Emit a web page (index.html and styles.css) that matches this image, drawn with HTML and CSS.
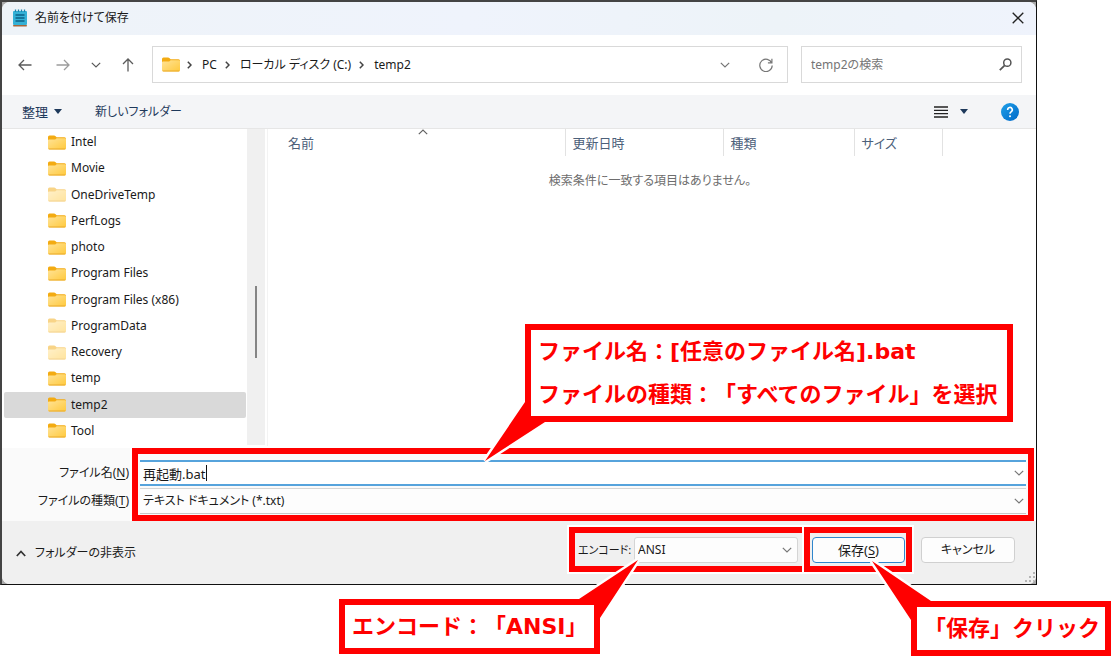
FILE: index.html
```html
<!DOCTYPE html>
<html lang="ja">
<head>
<meta charset="utf-8">
<title>名前を付けて保存</title>
<link rel="stylesheet" href="styles.css">
</head>
<body>
<svg class="defs" width="0" height="0" aria-hidden="true">
  <defs>
    <linearGradient id="front" x1="0" y1="0" x2="1" y2="1"><stop offset="0" stop-color="#ffe397"/><stop offset="1" stop-color="#ffc93c"/></linearGradient>
    <linearGradient id="helpfill" x1="0" y1="0" x2="1" y2="1"><stop offset="0" stop-color="#1fa0e8"/><stop offset="1" stop-color="#0068c8"/></linearGradient>
  </defs>
  <symbol id="folder" viewBox="0 0 18 15">
    <path d="M0 2Q0 .5 1.500 .5H6Q7 .5 7.600 1.200L8.600 2.200H16.500Q18 2.200 18 3.700V8H0Z" fill="#f3ab12"/>
    <path d="M0 5.300Q0 4.500 1 4.500H6.500Q7.200 4.500 7.800 4L8.600 3.200H17Q18 3.200 18 4.200V13Q18 14.500 16.500 14.500H1.500Q0 14.500 0 13Z" fill="url(#front)"/>
    <path d="M.3 13.600Q.7 14.500 1.500 14.500H16.500Q17.300 14.500 17.700 13.600Z" fill="#e9a92c"/>
  </symbol>
  <symbol id="down" viewBox="0 0 10 6"><path d="M.8 .8L5 5L9.200 .8" fill="none" stroke="currentColor" stroke-width="1.200"/></symbol>
  <symbol id="right" viewBox="0 0 5 8"><path d="M.8 .8L4 4L.8 7.200" fill="none" stroke="currentColor" stroke-width="1.500"/></symbol>
</svg>

<div class="page">
  <div class="shot">
  <main class="dialog">
    <header class="titlebar">
      <svg class="notepad" viewBox="0 0 14 18">
        <rect x="0" y="2" width="14" height="14" rx="1" fill="#35b1d6"/>
        <rect x="0" y="16" width="14" height="1.500" rx=".7" fill="#a5663a"/>
        <path d="M2.500 .5V3M5.500 .5V3M8.500 .5V3M11.500 .5V3" stroke="#1d86ad" stroke-width="1.300"/>
        <path d="M2.500 6H11.500M2.500 9H11.500M2.500 12H11.500" stroke="#0c6288" stroke-width="1.300"/>
      </svg>
      <h1 class="title">名前を付けて保存</h1>
      <button class="icon-btn close" aria-label="閉じる"><svg width="12" height="12" viewBox="0 0 12 12"><path d="M.7 .7L11.300 11.300M11.300 .7L.7 11.300" stroke="#222" stroke-width="1.300"/></svg></button>
    </header>

    <nav class="nav">
      <div class="arrows">
        <button class="icon-btn" aria-label="戻る"><svg width="14" height="12" viewBox="0 0 14 12"><path d="M13.500 6H1M6 1L1 6L6 11" fill="none" stroke="#5b5b5b" stroke-width="1.300"/></svg></button>
        <button class="icon-btn forward" aria-label="進む"><svg width="14" height="12" viewBox="0 0 14 12"><path d="M.5 6H13M8 1L13 6L8 11" fill="none" stroke="#9c9c9c" stroke-width="1.300"/></svg></button>
        <button class="icon-btn" aria-label="最近の場所"><svg width="10" height="6"><use href="#down"/></svg></button>
        <button class="icon-btn" aria-label="上へ"><svg width="12" height="14" viewBox="0 0 12 14"><path d="M6 13.500V1M1 6L6 1L11 6" fill="none" stroke="#5b5b5b" stroke-width="1.300"/></svg></button>
      </div>
      <div class="address">
        <svg width="18" height="15"><use href="#folder"/></svg>
        <svg class="sep" width="5" height="8"><use href="#right"/></svg>
        <a class="crumb" href="#">PC</a>
        <svg class="sep" width="5" height="8"><use href="#right"/></svg>
        <a class="crumb" href="#">ローカル ディスク (C:)</a>
        <svg class="sep" width="5" height="8"><use href="#right"/></svg>
        <a class="crumb" href="#">temp2</a>
        <div class="address-tools">
          <button class="icon-btn" aria-label="履歴"><svg width="10" height="6"><use href="#down"/></svg></button>
          <button class="icon-btn" aria-label="更新"><svg width="14" height="14" viewBox="0 0 14 14"><path d="M12.800 5.200A6.200 6.200 0 1 0 13.200 7.500M12.900 .8V4.800H8.900" fill="none" stroke="#777" stroke-width="1.200"/></svg></button>
        </div>
      </div>
      <label class="search">
        <input class="search-input" type="text" placeholder="temp2の検索" aria-label="temp2の検索">
        <svg width="13" height="13" viewBox="0 0 13 13"><circle cx="8.300" cy="4.700" r="3.600" fill="none" stroke="#555" stroke-width="1.500"/><path d="M5.700 7.300L.8 12.200" stroke="#555" stroke-width="1.700"/></svg>
      </label>
    </nav>

    <div class="toolbar">
      <button class="tool large">整理<span class="tri"></span></button>
      <button class="tool">新しいフォルダー</button>
      <div class="view-tools">
        <button class="icon-btn" aria-label="表示"><svg width="14" height="12" viewBox="0 0 14 12"><path d="M0 1H14M0 4.300H14M0 7.600H14M0 11H14" stroke="#222" stroke-width="1.300"/></svg></button>
        <button class="icon-btn" aria-label="表示オプション"><span class="tri"></span></button>
        <button class="icon-btn help" aria-label="ヘルプ"><svg width="18" height="18" viewBox="0 0 18 18"><circle cx="9" cy="9" r="9" fill="url(#helpfill)"/><path d="M6.700 7A2.300 2.300 0 1 1 10.200 8.700Q9 9.400 9 10.800" fill="none" stroke="#fff" stroke-width="1.600"/><circle cx="9" cy="13.200" r="1" fill="#fff"/></svg></button>
      </div>
    </div>

    <div class="body">
      <ul class="tree">
        <li class="node"><svg class="folder"><use href="#folder"/></svg>Intel</li>
        <li class="node"><svg class="folder"><use href="#folder"/></svg>Movie</li>
        <li class="node"><svg class="folder faded"><use href="#folder"/></svg>OneDriveTemp</li>
        <li class="node"><svg class="folder"><use href="#folder"/></svg>PerfLogs</li>
        <li class="node"><svg class="folder"><use href="#folder"/></svg>photo</li>
        <li class="node"><svg class="folder"><use href="#folder"/></svg>Program Files</li>
        <li class="node"><svg class="folder"><use href="#folder"/></svg>Program Files (x86)</li>
        <li class="node"><svg class="folder faded"><use href="#folder"/></svg>ProgramData</li>
        <li class="node"><svg class="folder faded"><use href="#folder"/></svg>Recovery</li>
        <li class="node"><svg class="folder"><use href="#folder"/></svg>temp</li>
        <li class="node selected"><svg class="folder"><use href="#folder"/></svg>temp2</li>
        <li class="node"><svg class="folder"><use href="#folder"/></svg>Tool</li>
      </ul>
      <div class="scrollbar"><div class="thumb"></div></div>
      <div class="files">
        <table class="table">
          <colgroup><col class="c-name"><col class="c-date"><col class="c-type"><col class="c-size"><col></colgroup>
          <thead><tr>
            <th class="sorted">名前<svg class="sort" width="10" height="6" viewBox="0 0 10 6"><path d="M.8 5.200L5 1L9.200 5.200" fill="none" stroke="#666" stroke-width="1.200"/></svg></th>
            <th>更新日時</th><th>種類</th><th>サイズ</th><td></td>
          </tr></thead>
          <tbody><tr><td class="empty" colspan="5">検索条件に一致する項目はありません。</td></tr></tbody>
        </table>
      </div>
    </div>

    <div class="fields">
      <div class="labels">
        <label class="label" for="fname">ファイル名(<u>N</u>)</label>
        <label class="label" for="ftype">ファイルの種類(<u>T</u>)</label>
      </div>
      <div class="inputs marked">
        <div class="combo active">
          <input id="fname" class="field large" type="text" value="再起動.bat">
          <span class="caret"></span>
          <svg class="chev" width="10" height="6"><use href="#down"/></svg>
        </div>
        <div class="combo">
          <select id="ftype" class="field"><option>テキスト ドキュメント (*.txt)</option></select>
          <svg class="chev" width="10" height="6"><use href="#down"/></svg>
        </div>
      </div>
    </div>

    <footer class="footer">
      <button class="fold"><svg width="10" height="7" viewBox="0 0 10 7"><path d="M.8 6L5 1.500L9.200 6" fill="none" stroke="#333" stroke-width="1.700"/></svg>フォルダーの非表示</button>
      <div class="encode marked">
        <label class="encode-label" for="enc">エンコード:</label>
        <div class="combo boxed">
          <select id="enc" class="field"><option>ANSI</option></select>
          <svg class="chev" width="10" height="6"><use href="#down"/></svg>
        </div>
      </div>
      <div class="save marked"><button class="btn primary large">保存(<u>S</u>)</button></div>
      <button class="btn">キャンセル</button>
      <svg class="grip" width="12" height="12" viewBox="0 0 12 12"><path d="M9 0h2v2h-2zM9 4h2v2h-2zM5 4h2v2h-2zM9 8h2v2h-2zM5 8h2v2h-2zM1 8h2v2h-2z" fill="#b5b5b5"/></svg>
    </footer>
  </main>
  </div>

  <div class="callout names">
    <p>ファイル名：[任意のファイル名].bat</p>
    <p>ファイルの種類：「すべてのファイル」を選択</p>
  </div>
  <div class="callout encoding"><p>エンコード：「ANSI」</p></div>
  <div class="callout saving"><p>「保存」クリック</p></div>
  <svg class="pointers" width="1116" height="661" viewBox="0 0 1116 661" aria-hidden="true">
    <g fill="none" stroke="#fff" stroke-width="5">
      <path d="M525 402L485 461L545 422"/>
      <path d="M579 599L638 560L600 618"/>
      <path d="M911 620L872 561L931 601"/>
    </g>
    <g fill="#f00">
      <path d="M525 402L485 461L545 422V417H530V402Z"/>
      <path d="M579 599L638 560L600 618H595V604H579Z"/>
      <path d="M911 620L872 561L931 601V606H916V620Z"/>
    </g>
  </svg>
</div>
</body>
</html>
```
FILE: styles.css
```css
* { box-sizing: border-box; }
body {
  margin: 0;
  background: #fff;
  color: #1a1a1a;
  font: 12px/16px "Noto Sans", "Noto Sans CJK JP", sans-serif;
  font-feature-settings: "palt";
}
button, input, select { font: inherit; font-feature-settings: inherit; color: inherit; }
button { border: 0; padding: 0; background: none; }
h1, p, ul { margin: 0; padding: 0; }
a { color: inherit; text-decoration: none; }
u { text-underline-offset: 2px; }
svg { display: block; flex: none; }
.defs { position: absolute; }
.large { font-size: 13px; }

.page { position: relative; padding: 0 79px 76px 0; }
.shot {
  border: 2px solid #444;
  border-right: 1px solid #111;
  border-bottom: 1px solid #111;
  background: #aaa;
}
.dialog {
  display: flex;
  flex-direction: column;
  background: #fff;
  border-radius: 8px;
  overflow: hidden;
}
.icon-btn { display: flex; align-items: center; justify-content: center; }

.titlebar {
  display: flex;
  align-items: center;
  gap: 8px;
  height: 33px;
  padding: 0 12px 2px 11px;
  background: linear-gradient(90deg, #eef3f8, #eff3fc 45%, #edf3f8 75%, #eff3fc);
}
.notepad { width: 14px; height: 18px; }
.title { font-size: 12px; line-height: 16px; font-weight: normal; }
.close { margin-left: auto; }

.nav { display: flex; align-items: center; gap: 13px; padding: 11px 14px 12px 16px; }
.arrows { display: flex; align-items: center; gap: 21px; width: 121px; color: #5b5b5b; }
.forward { margin-left: 3px; }
.address {
  display: flex;
  align-items: center;
  flex: 1;
  height: 37px;
  padding: 0 14px 0 9px;
  border: 1px solid #d9d9d9;
}
.sep { margin: 0 8px 0 7px; color: #444; }
.crumb { padding: 0 1px 0 2px; }
.address-tools { display: flex; gap: 29px; margin-left: auto; color: #777; }
.search {
  display: flex;
  align-items: center;
  width: 221px;
  height: 37px;
  padding: 0 9px;
  border: 1px solid #d9d9d9;
}
.search-input { flex: 1; min-width: 0; border: 0; padding: 0; outline: 0; background: none; }
.search-input::placeholder { color: #757575; opacity: 1; }

.toolbar {
  display: flex;
  align-items: center;
  gap: 33px;
  height: 34px;
  padding: 0 17px 0 20px;
  background: #f4f5f7;
  border-bottom: 1px solid #e6e6e6;
  color: #1e395b;
}
.tool { display: flex; align-items: center; gap: 6px; }
.tri { border: 4px solid transparent; border-top: 5px solid #1e395b; border-bottom: 0; }
.view-tools { display: flex; align-items: center; gap: 12px; margin-left: auto; }
.help { margin-left: 21px; }

.body { display: flex; height: 319px; }
.tree { display: grid; grid-auto-rows: 1fr; width: 245px; padding: 0 1px 4px 2px; list-style: none; }
.node { display: flex; align-items: center; gap: 5px; padding-left: 44px; border-radius: 2px; }
.node.selected { background: #d9d9d9; }
.folder { width: 18px; height: 15px; }
.faded { opacity: .5; }
.scrollbar { width: 18px; margin-bottom: 3px; padding: 157px 8px 0; background: #f0f0f0; }
.thumb { width: 2px; height: 72px; background: #858585; }
.files { flex: 1; margin-left: 2px; border-left: 1px solid #f3f3f3; }
.table { width: 100%; table-layout: fixed; border-collapse: collapse; }
.c-name { width: 297px; }
.c-date { width: 158px; }
.c-type { width: 131px; }
.c-size { width: 88px; }
.table th {
  position: relative;
  height: 27px;
  padding: 0 7px;
  border-right: 1px solid #e2e2e2;
  color: #4c607a;
  font-size: 13px;
  font-weight: normal;
  text-align: left;
}
.table .sorted { padding-left: 20px; }
.sort { position: absolute; top: 0; left: calc(50% + 2px); }
.empty { padding: 17px 4px 0 0; color: #6d6d6d; text-align: center; }

.fields { display: flex; gap: 3px; padding-right: 2px; background: #fafafa; }
.labels { display: flex; flex-direction: column; gap: 2px; width: 127px; padding: 12px 0 7px; text-align: right; }
.label { height: 26px; line-height: 26px; white-space: nowrap; }
.marked { border: 6px solid #f00; outline: 2px solid #fff; }
.inputs { display: flex; flex: 1; flex-direction: column; gap: 2px; padding: 6px 2px 1px; }
.combo {
  position: relative;
  display: flex;
  align-items: center;
  height: 26px;
  border-top: 1px solid #d5d5d5;
  border-bottom: 1px solid #c8c8c8;
  background: #fdfdfd;
  color: #777;
}
.combo.active { border-top: 2px solid #56a3dc; border-bottom: 2px solid #56a3dc; background: #fff; }
.field { width: 100%; height: 100%; padding: 0 3px; border: 0; outline: 0; background: none; appearance: none; color: #1a1a1a; }
.caret { position: absolute; left: 66px; width: 1px; height: 16px; background: #111; }
.chev { position: absolute; right: 2px; }

.footer { position: relative; display: flex; align-items: flex-start; min-height: 63px; padding: 6px 21px 5px 14px; background: #f0f0f0; }
.fold { display: flex; align-items: center; gap: 9px; height: 52px; margin-right: auto; }
.encode { display: flex; align-items: center; width: 239px; height: 45px; padding: 0 4px 0 3px; }
.encode-label { flex: 1; font-size: 11px; white-space: nowrap; }
.boxed { width: 164px; border: 1px solid #d5d5d5; border-radius: 3px; }
.boxed .chev { right: 5px; }
.save { position: relative; height: 45px; margin: 0 9px 0 -4px; padding: 4px 1px 3px 2px; }
.btn { width: 94px; height: 26px; margin-top: 10px; border: 1px solid #d0d0d0; border-radius: 4px; background: #fdfdfd; }
.primary { width: 93px; margin-top: 0; border-color: #2f86cc; }
.grip { position: absolute; right: 0; bottom: 0; }

.callout {
  position: absolute;
  border: 6px solid #f00;
  background: #fff;
  color: #f00;
  font: bold 22px/43px "DejaVu Sans", "Noto Sans CJK JP", sans-serif;
  font-feature-settings: normal;
  text-spacing-trim: space-all;
  white-space: nowrap;
}
.names { left: 525px; top: 324px; width: 488px; padding: 0 7px; }
.encoding { left: 339px; top: 599px; width: 261px; padding: 0 7px; }
.saving { left: 911px; top: 601px; width: 200px; padding: 0 7px; }
.pointers { position: absolute; left: 0; top: 0; pointer-events: none; }
```
